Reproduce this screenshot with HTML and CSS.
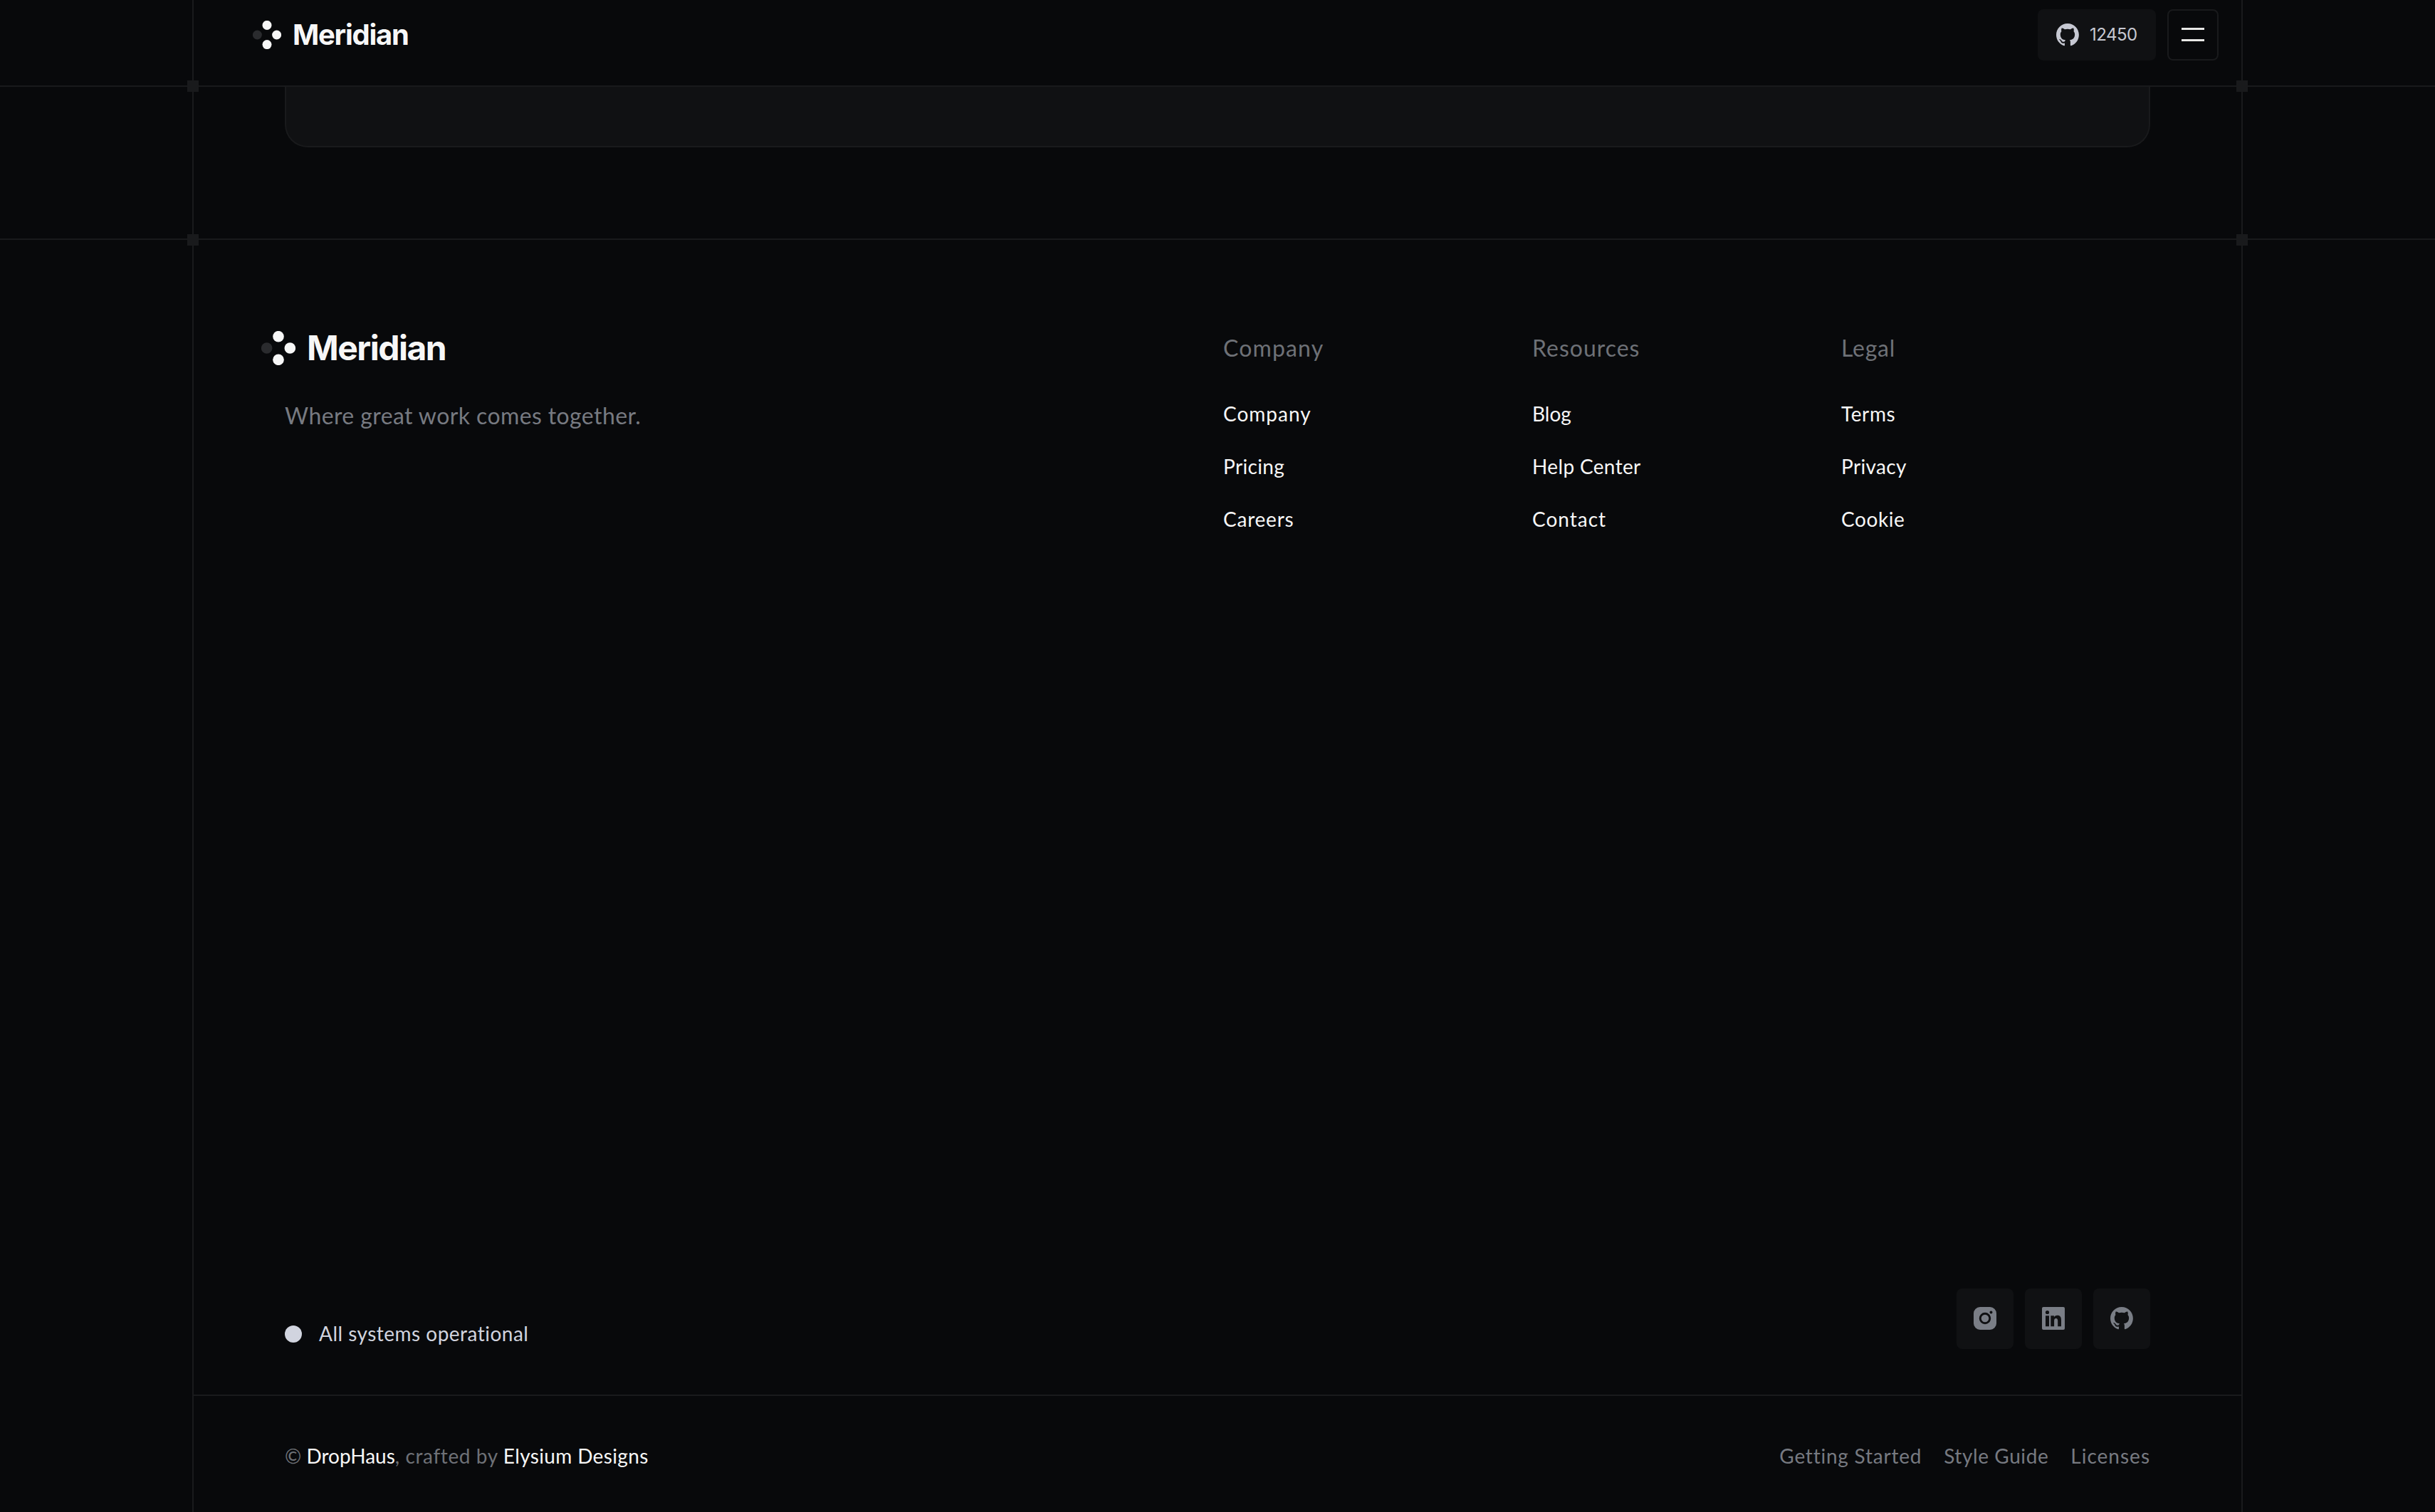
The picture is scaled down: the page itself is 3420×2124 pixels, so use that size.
FILE: index.html
```html
<!DOCTYPE html>
<html lang="en">
<head>
<meta charset="utf-8">
<title>Meridian</title>
<link rel="stylesheet" href="styles.css">
</head>
<body>
<svg class="sprite" aria-hidden="true">
  <symbol id="mark" viewBox="0 0 40 40">
    <circle cx="20" cy="6.4" r="6.5" fill="#f7f7f7"/>
    <circle cx="33.6" cy="20" r="6.5" fill="#f7f7f7"/>
    <circle cx="20" cy="33.6" r="6.5" fill="#f7f7f7"/>
    <circle cx="6.4" cy="20" r="6.5" fill="#2a2b2e"/>
  </symbol>
  <symbol id="github" viewBox="0 0 98 98">
    <path fill="currentColor" d="M48.854 0C21.839 0 0 22 0 49.217c0 21.756 13.993 40.172 33.405 46.69 2.427.49 3.316-1.059 3.316-2.362 0-1.141-.08-5.052-.08-9.127-13.59 2.934-16.42-5.867-16.42-5.867-2.184-5.704-5.42-7.17-5.42-7.17-4.448-3.015.324-3.015.324-3.015 4.934.326 7.523 5.052 7.523 5.052 4.367 7.496 11.404 5.378 14.235 4.074.404-3.178 1.699-5.378 3.074-6.6-10.839-1.141-22.243-5.378-22.243-24.283 0-5.378 1.94-9.778 5.014-13.2-.485-1.222-2.184-6.275.486-13.038 0 0 4.125-1.304 13.426 5.052a46.97 46.97 0 0 1 12.214-1.63c4.125 0 8.33.571 12.213 1.63 9.302-6.356 13.427-5.052 13.427-5.052 2.67 6.763.97 11.816.485 13.038 3.155 3.422 5.015 7.822 5.015 13.2 0 18.905-11.404 23.06-22.324 24.283 1.78 1.548 3.316 4.481 3.316 9.126 0 6.6-.08 11.897-.08 13.526 0 1.304.89 2.853 3.316 2.364 19.412-6.52 33.405-24.935 33.405-46.691C97.707 22 75.788 0 48.854 0z"/>
  </symbol>
  <symbol id="instagram" viewBox="0 0 32 32">
    <path fill="currentColor" fill-rule="evenodd" d="M9 0h14a9 9 0 0 1 9 9v14a9 9 0 0 1-9 9H9a9 9 0 0 1-9-9V9a9 9 0 0 1 9-9zM16 7.800a8.200 8.200 0 1 0 0 16.400a8.200 8.200 0 1 0 0-16.400zM16 10.700a5.300 5.300 0 1 1 0 10.600a5.300 5.300 0 1 1 0-10.600zM24.500 5.400a2 2 0 1 0 0 4a2 2 0 1 0 0-4z"/>
  </symbol>
  <symbol id="linkedin" viewBox="0 0 32 32">
    <path fill="currentColor" fill-rule="evenodd" d="M2 0h28a2 2 0 0 1 2 2v28a2 2 0 0 1-2 2H2a2 2 0 0 1-2-2V2a2 2 0 0 1 2-2zM5 12.300v15h5v-15zM7.500 4.900a2.600 2.600 0 1 0 0 5.200a2.600 2.600 0 1 0 0-5.200zM12.300 12.300v15h4.800v-7.600c0-2 .6-3.700 2.600-3.700s2.500 1.800 2.500 3.800v7.500H27v-8.600c0-4.200-1.200-6.900-5.500-6.900-2.300 0-3.800 1.200-4.500 2.400h-.1v-1.900z"/>
  </symbol>
</svg>

<header class="header">
  <div class="container header-row">
    <a class="logo"><svg class="logo-mark"><use href="#mark"/></svg><span class="logo-name">Meridian</span></a>
    <div class="header-actions">
      <a class="stars"><svg class="icon"><use href="#github"/></svg><span>12450</span></a>
      <button class="menu" aria-label="Menu"><i></i><i></i></button>
    </div>
    <b class="node node-left"></b><b class="node node-right"></b>
  </div>
</header>

<main class="preview">
  <div class="container preview-inner">
    <div class="card"></div>
    <b class="node node-left"></b><b class="node node-right"></b>
  </div>
</main>

<footer class="container footer">
  <div class="footer-main">
    <div class="footer-top">
      <div class="brand">
        <a class="logo logo-large"><svg class="logo-mark"><use href="#mark"/></svg><span class="logo-name">Meridian</span></a>
        <p class="tagline">Where great work comes together.</p>
      </div>
      <nav class="column">
        <h2 class="track-12">Company</h2>
        <a class="track-10">Company</a><a class="track-4">Pricing</a><a class="track-8">Careers</a>
      </nav>
      <nav class="column">
        <h2 class="track-10">Resources</h2>
        <a>Blog</a><a class="track-4">Help Center</a><a class="track-10">Contact</a>
      </nav>
      <nav class="column">
        <h2 class="track-8">Legal</h2>
        <a class="track-6">Terms</a><a class="track-4">Privacy</a><a class="track-6">Cookie</a>
      </nav>
    </div>
    <div class="footer-status">
      <div class="status"><i class="dot"></i><span class="track-5">All systems operational</span></div>
      <div class="social">
        <a><svg class="icon"><use href="#instagram"/></svg></a>
        <a><svg class="icon"><use href="#linkedin"/></svg></a>
        <a><svg class="icon"><use href="#github"/></svg></a>
      </div>
    </div>
  </div>
  <div class="footer-bottom">
    <p class="credit">© <a>DropHaus</a><span class="track-6">, crafted by </span><a class="track-4">Elysium Designs</a></p>
    <nav class="legal"><a class="track-8">Getting Started</a><a class="track-6">Style Guide</a><a class="track-10">Licenses</a></nav>
  </div>
</footer>
</body>
</html>
```

FILE: styles.css
```css
* { box-sizing: border-box; }

body {
  margin: 0;
  height: 2124px;
  overflow: hidden;
  display: flex;
  flex-direction: column;
  background: #08090b;
  color: #f7f7f7;
  font: 400 28px/34px Lato, "Liberation Sans", sans-serif;
}

h2, p { margin: 0; font-weight: 400; }
svg { display: block; }
.sprite { position: absolute; width: 0; height: 0; }
.icon { width: 32px; height: 32px; }

.track-4 { letter-spacing: 0.35px; }
.track-5 { letter-spacing: 0.48px; }
.track-6 { letter-spacing: 0.6px; }
.track-8 { letter-spacing: 0.77px; }
.track-10 { letter-spacing: 1px; }
.track-12 { letter-spacing: 1.15px; }

.container {
  position: relative;
  width: 2880px;
  margin: 0 auto;
  border: solid #191a1c;
  border-width: 0 2px;
}

.node {
  position: absolute;
  bottom: -9px;
  width: 16px;
  height: 16px;
  background: #191a1c;
}
.node-left { left: -9px; }
.node-right { right: -9px; }

/* Header */
.header { border-bottom: 2px solid #191a1c; }
.header-row {
  height: 120px;
  padding: 13px 32px 0 83px;
  display: flex;
  justify-content: space-between;
  align-items: flex-start;
}
.logo {
  display: flex;
  align-items: center;
  gap: 16px;
  height: 72px;
}
.logo-mark { width: 40px; height: 40px; }
.logo-name {
  font: 700 40px/48px Inter, "Liberation Sans", sans-serif;
  letter-spacing: -1.26px;
}
.header-actions { display: flex; gap: 16px; }
.stars {
  width: 166px;
  height: 72px;
  padding-left: 26px;
  display: flex;
  align-items: center;
  gap: 15px;
  border-radius: 8px;
  background: #101113;
  color: #c6c8d2;
  font: 400 24px/32px Inter, "Liberation Sans", sans-serif;
  letter-spacing: -0.5px;
}
.menu {
  width: 72px;
  height: 72px;
  padding: 0 0 1px;
  display: flex;
  flex-direction: column;
  align-items: center;
  justify-content: center;
  gap: 13px;
  border: 2px solid #191a1c;
  border-radius: 8px;
  background: none;
}
.menu i { width: 32px; height: 3px; background: #e8e8e6; }

/* Section end */
.preview { border-bottom: 2px solid #191a1c; }
.preview-inner { padding: 0 128px 128px; }
.preview-inner .node { bottom: -10px; }
.card {
  height: 85px;
  border: 2px solid #191a1c;
  border-top: 0;
  border-radius: 0 0 32px 32px;
  background: #101113;
}

/* Footer */
.footer { flex: 1; display: flex; flex-direction: column; }
.footer-main {
  height: 1624px;
  padding: 128px 128px 64px;
  display: flex;
  flex-direction: column;
  justify-content: space-between;
  border-bottom: 2px solid #191a1c;
}
.footer-top { display: grid; grid-template-columns: 1318px repeat(3, 434px); }
.logo-large { height: 48px; margin-left: -33px; gap: 16px; }
.logo-large .logo-mark { width: 48px; height: 48px; }
.logo-large .logo-name { font-size: 48px; letter-spacing: -1.5px; }
.tagline {
  margin-top: 51px;
  color: #777a81;
  font-size: 32px;
  line-height: 40px;
  letter-spacing: 0.4px;
}
.column {
  padding-top: 4px;
  display: flex;
  flex-direction: column;
  align-items: flex-start;
  gap: 40px;
}
.column h2 {
  margin-bottom: 15px;
  color: #6e7177;
  font-size: 32px;
  line-height: 40px;
}
.footer-status {
  display: flex;
  justify-content: space-between;
  align-items: flex-end;
}
.status {
  margin-bottom: 5px;
  display: flex;
  align-items: center;
  gap: 24px;
  color: #d1d4df;
}
.dot {
  width: 24px;
  height: 24px;
  margin-top: 2px;
  border-radius: 50%;
  background: #d1d4df;
}
.social { display: flex; gap: 16px; }
.social a {
  width: 80px;
  height: 85px;
  padding-bottom: 1px;
  display: grid;
  place-items: center;
  border-radius: 8px;
  background: #101113;
  color: #7a7e86;
}
.footer-bottom {
  padding: 67px 128px 0;
  display: flex;
  justify-content: space-between;
  color: #777a81;
}
.credit { color: #6e7177; white-space: pre; }
.credit a { color: #f7f7f7; }
.legal { display: flex; gap: 31px; }
```
